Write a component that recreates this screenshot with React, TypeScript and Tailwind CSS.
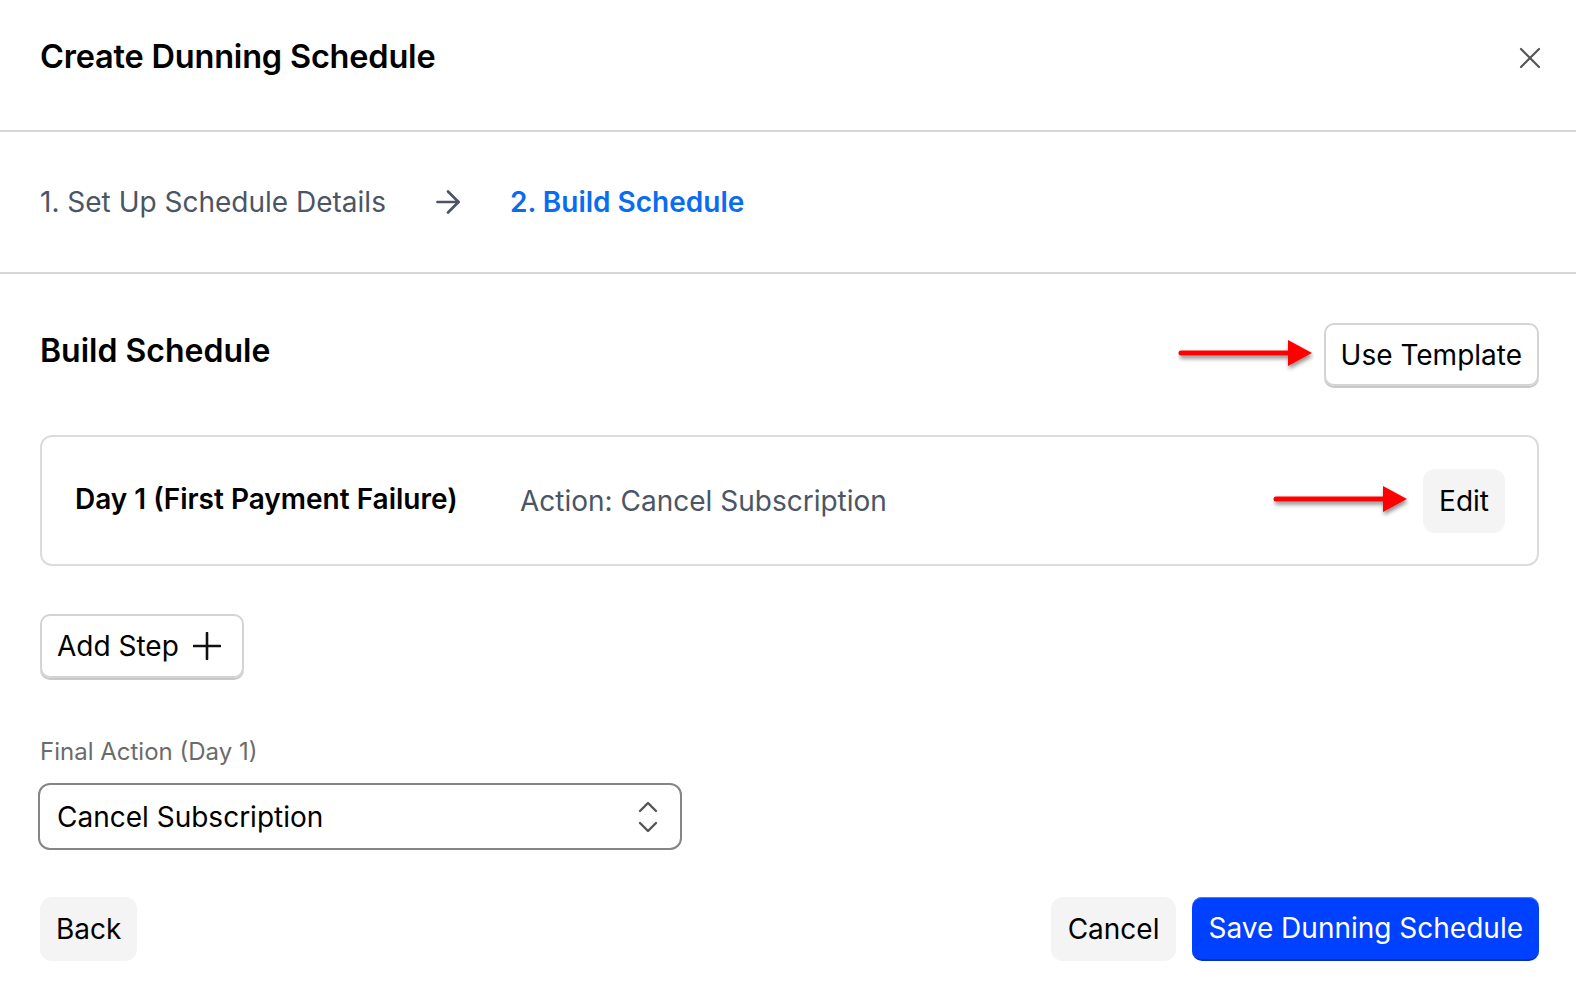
import { ArrowRight } from "lucide-react"

function RedArrow() {
  return (
    <svg width="136" height="36" viewBox="0 0 136 36" className="shrink-0">
      <defs>
        <filter id="sh" x="-20%" y="-50%" width="140%" height="220%">
          <feDropShadow dx="1" dy="3" stdDeviation="2" floodColor="#000" floodOpacity="0.45" />
        </filter>
      </defs>
      <g filter="url(#sh)">
        <line x1="3" y1="16" x2="112" y2="16" stroke="#ff0000" strokeWidth="5" strokeLinecap="round" />
        <polygon points="110,3 134,16 110,29" fill="#ff0000" />
      </g>
    </svg>
  )
}

export default function App() {
  return (
    <div className="w-[1576px] h-[1006px] bg-white text-black font-['Inter',sans-serif] overflow-hidden">
      <header className="h-[132px] border-b-2 border-[#d6d6d6] pl-10 pr-[37px] flex items-center justify-between pb-[16px]">
        <h1 className="text-[32.5px] font-semibold tracking-[-0.2px]">Create Dunning Schedule</h1>
        <svg width="22" height="22" viewBox="0 0 22 22" className="mr-[-2px] mt-[2px]">
          <path d="M2 2 L20 20 M20 2 L2 20" stroke="#555" strokeWidth="2.2" strokeLinecap="round" />
        </svg>
      </header>

      <nav className="h-[142px] border-b-2 border-[#d6d6d6] pl-10 flex items-center gap-[44px] text-[28px]">
        <span className="text-[#4b5563]">1. Set Up Schedule Details</span>
        <ArrowRight className="w-[36px] h-[36px] text-[#4b5563]" strokeWidth={1.8} />
        <span className="text-[#0a6cf0] font-semibold">2. Build Schedule</span>
      </nav>

      <main className="pl-10 pr-[37px] pt-[49px]">
        <div className="flex items-center justify-between h-[63px]">
          <h2 className="text-[32px] font-semibold -mt-[8px]">Build Schedule</h2>
          <div className="flex items-center gap-[10px]">
            <RedArrow />
            <button className="h-[63px] px-[15px] rounded-[10px] border-2 border-[#d4d4d4] shadow-[0_2px_0_#c8c8c8] text-[28px]">
              Use Template
            </button>
          </div>
        </div>

        <div className="mt-[49px] h-[131px] rounded-[12px] border-2 border-[#dcdcdc] flex items-center pl-[33px] pr-[32px]">
          <span className="text-[28px] font-semibold w-[445px] -mt-[4px]">Day 1 (First Payment Failure)</span>
          <span className="text-[28px] text-[#4b5563]">Action: Cancel Subscription</span>
          <div className="ml-auto flex items-center gap-[14px]">
            <RedArrow />
            <button className="h-[64px] px-[16px] rounded-[12px] bg-[#f4f4f4] text-[28px]">Edit</button>
          </div>
        </div>

        <button className="mt-[48px] h-[64px] pl-[15px] pr-[21px] rounded-[10px] border-2 border-[#d4d4d4] shadow-[0_2px_0_#c8c8c8] text-[28px] flex items-center gap-[14px]">
          Add Step
          <svg width="28" height="28" viewBox="0 0 28 28">
            <path d="M14 1 V27 M1 14 H27" stroke="#111" strokeWidth="2.6" strokeLinecap="round" />
          </svg>
        </button>

        <div className="mt-[59px] text-[24px] text-[#6b6b6b] leading-[30px]">Final Action (Day 1)</div>

        <div className="mt-[16px] -ml-[2px] w-[644px] h-[67px] rounded-[12px] border-2 border-[#858585] flex items-center justify-between pl-[17px] pr-[22px] text-[28px]">
          <span>Cancel Subscription</span>
          <svg width="20" height="32" viewBox="0 0 20 32">
            <path d="M2 10 L10 2 L18 10 M2 22 L10 30 L18 22" fill="none" stroke="#555" strokeWidth="2.4" strokeLinecap="round" strokeLinejoin="round" />
          </svg>
        </div>

        <div className="mt-[47px] flex items-center justify-between">
          <button className="h-[64px] px-[16px] rounded-[12px] bg-[#f4f4f4] text-[28px]">Back</button>
          <div className="flex items-center gap-[16px]">
            <button className="h-[64px] px-[17px] rounded-[12px] bg-[#f4f4f4] text-[28px]">Cancel</button>
            <button className="h-[64px] px-[16px] rounded-[10px] bg-[#0040ff] text-white text-[28px] border-b-2 border-[#0030c0] shadow-[inset_0_1px_0_#4d7aff]">
              Save Dunning Schedule
            </button>
          </div>
        </div>
      </main>
    </div>
  )
}
